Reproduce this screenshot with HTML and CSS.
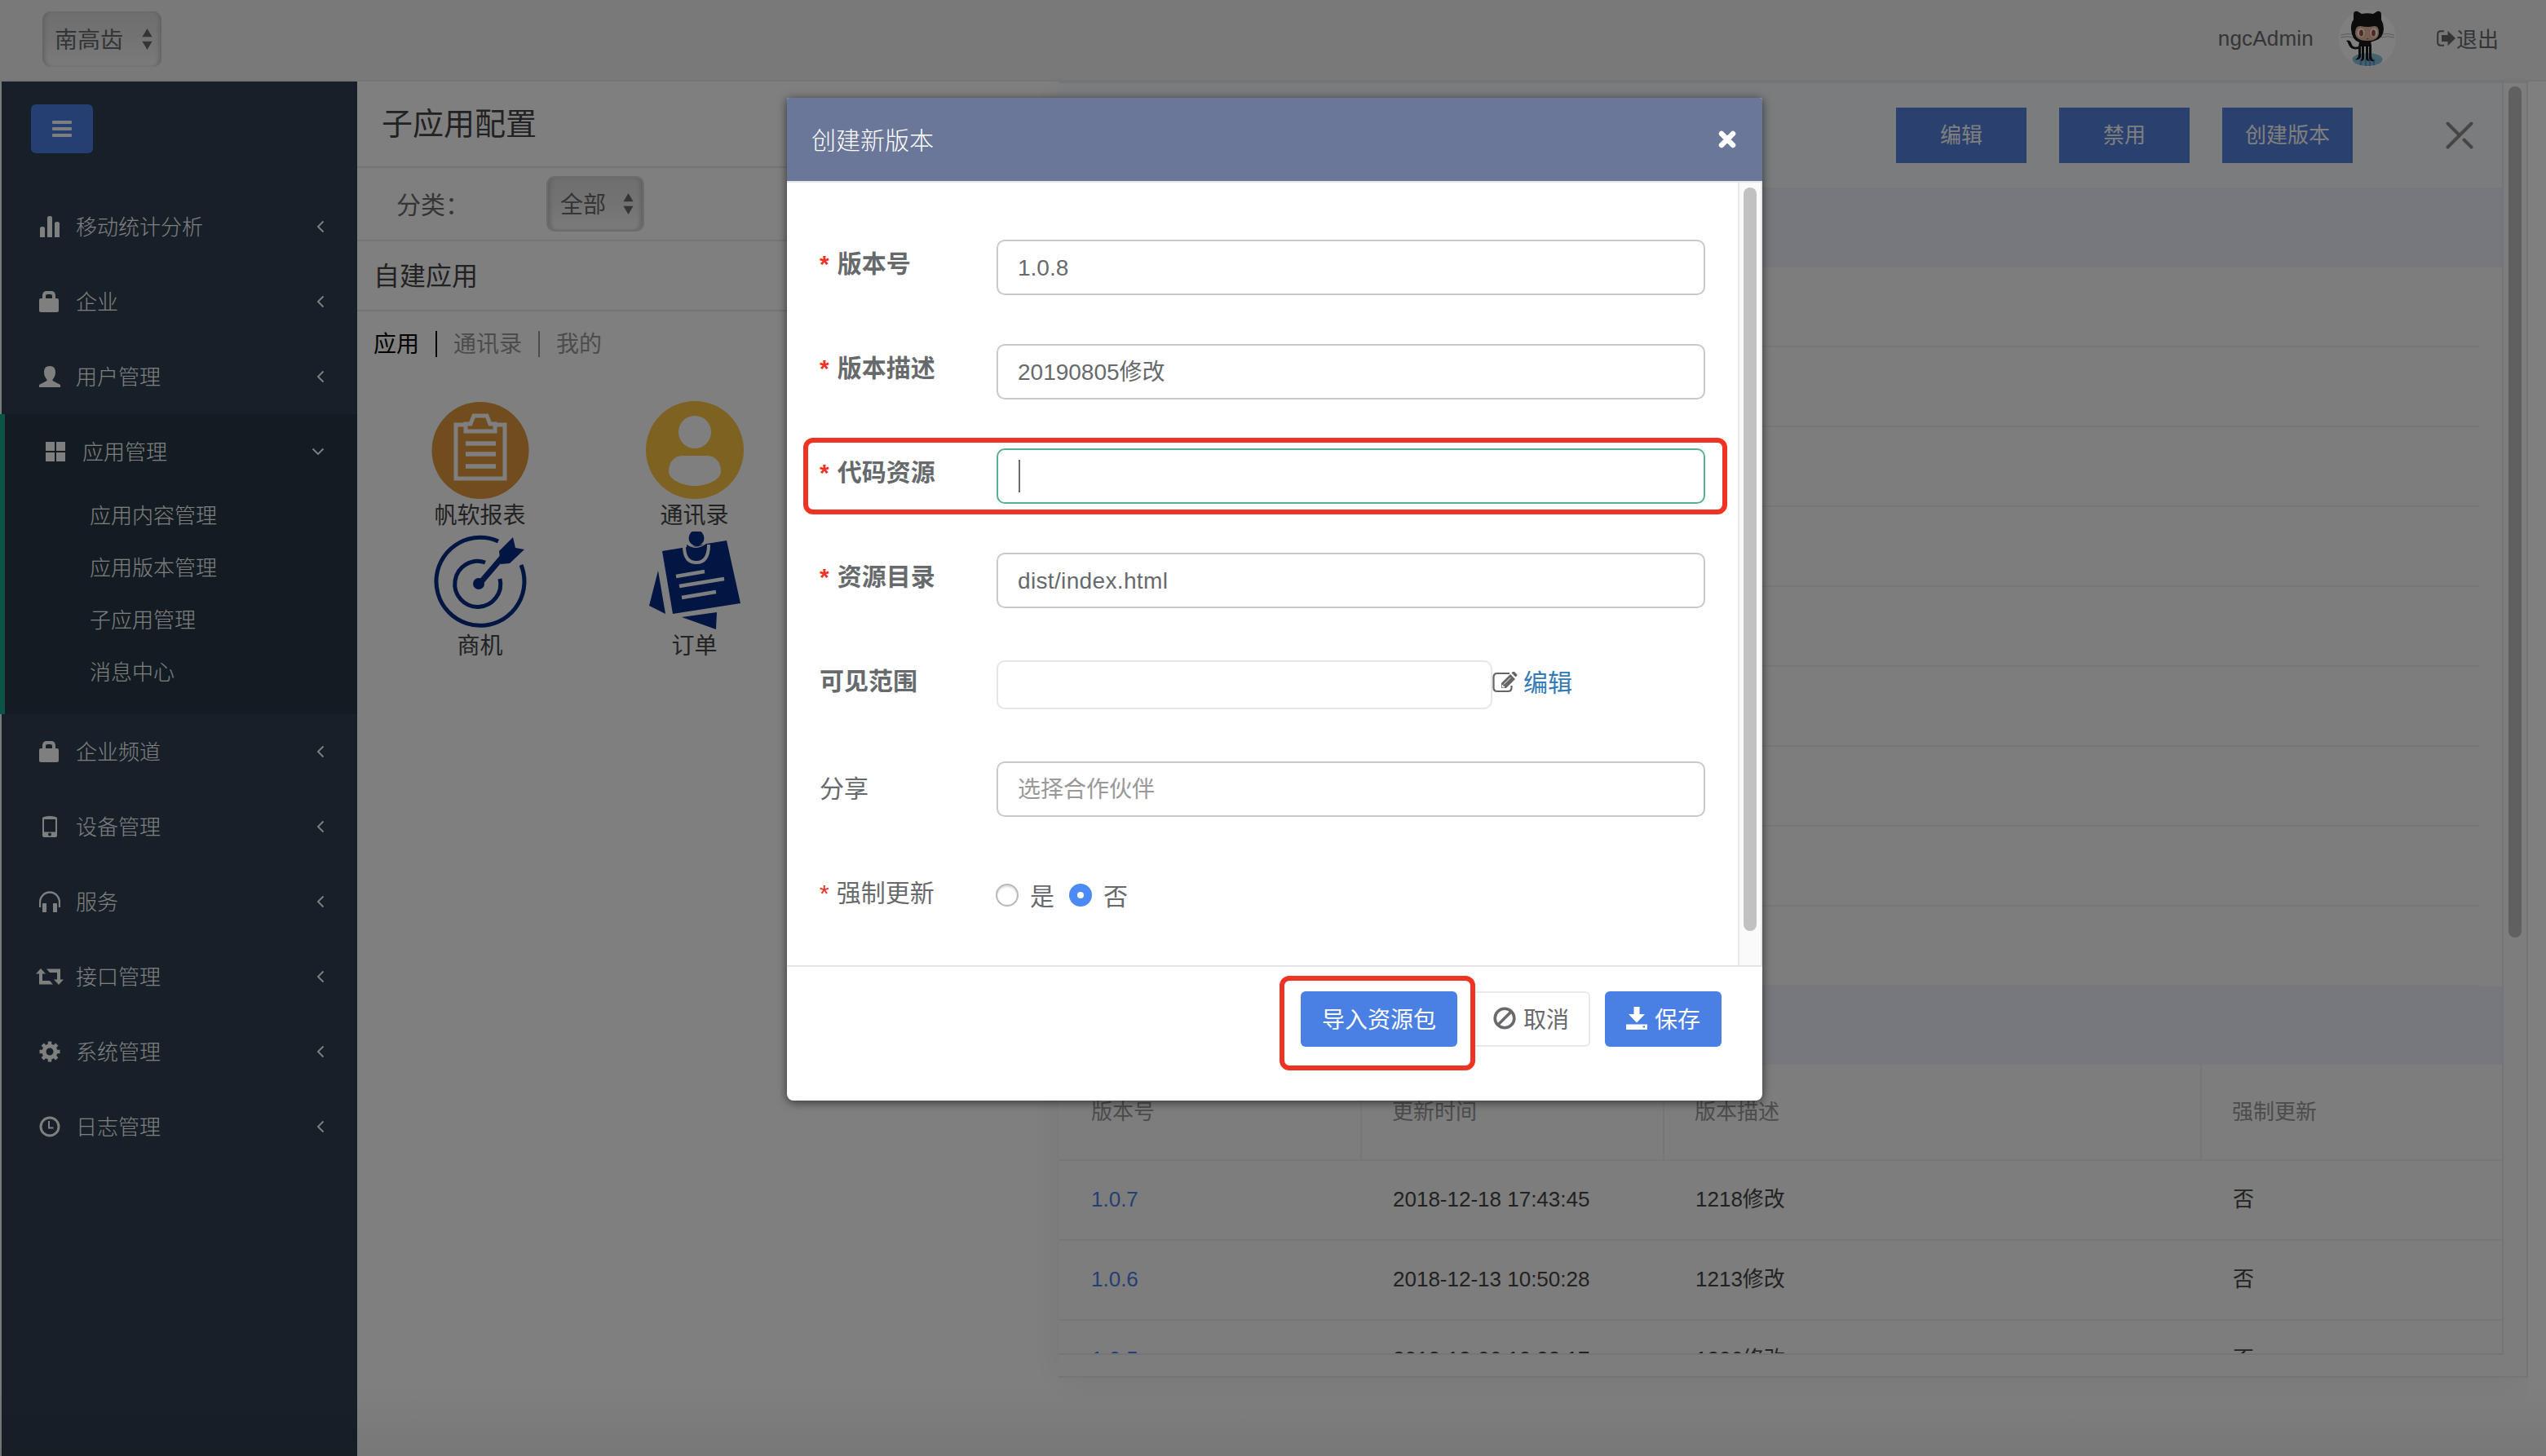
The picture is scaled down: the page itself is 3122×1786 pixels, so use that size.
FILE: index.html
```html
<!DOCTYPE html>
<html lang="zh-CN">
<head>
<meta charset="utf-8">
<title>子应用配置</title>
<link rel="stylesheet" href="styles.css">
</head>
<body>
<svg class="defs" width="0" height="0">
  <symbol id="left" viewBox="0 0 10 16"><path d="M8.500 1.500L2 8l6.500 6.500" fill="none" stroke="currentColor" stroke-width="1.900"/></symbol>
  <symbol id="down" viewBox="0 0 16 10"><path d="M1.500 1.500L8 8l6.500-6.500" fill="none" stroke="currentColor" stroke-width="1.900"/></symbol>
  <symbol id="lock" viewBox="0 0 24 26"><path d="M2 9h2V6c0-4 2-6 5-6h6c3 0 5 2 5 6v3h2q2 0 2 2v13q0 2-2 2H2q-2 0-2-2V11q0-2 2-2zm6 0h8V6q0-2-2-2h-4q-2 0-2 2z" fill="currentColor"/></symbol>
  <symbol id="sort" viewBox="0 0 14 28"><path d="M7 0l6.500 11H.5zM7 28l6.500-11H.5z" fill="currentColor"/></symbol>
</svg>

<div class="app">
  <header class="topbar">
    <div class="select company"><span>南高齿</span><svg width="13" height="26"><use href="#sort"/></svg></div>
    <div class="user">
      <span class="user-name">ngcAdmin</span>
      <svg class="avatar" width="70" height="70" viewBox="0 0 70 70">
        <circle cx="35" cy="35" r="35" fill="#fff"/>
        <ellipse cx="35" cy="61" rx="18.500" ry="8" fill="#8dc5dc"/>
        <path d="M27 60v8M33 60v9M38 60v9M43 60v8" stroke="#6696c4" stroke-width="2.500"/>
        <path d="M2 31q8-2.500 16-1M2 34q8-2.500 16 0M52 30q8-1.500 16 1M52 34q8-2.500 16 0" fill="none" stroke="#bbb" stroke-width="1"/>
        <path d="M18 6q0-5 5-4l5 3q7-1.500 14 0l5-3q5-1 5 4v6q3 5 3 11 0 12-11 15-4 1-5 2l1 3v14q1 5 4 6-5 1-7-3V45h-1v14q1 3 1 4-3 0-4-3V45h-2v15q-1 3-4 3l1-4V45h-1v13q-2 4-7 3 4-2 4-6v-7q-9 2-12-5-1-4-3-5 5-2 7 5 2 4 8 2l1-5Q16 37 15 24q-.5-7 3-12z" fill="#1b1919"/>
        <path d="M20 29q0-10 7-9 8 2 16 0 6-1 6 8 0 10-14 10t-15-9z" fill="#e6bc9f"/>
        <ellipse cx="27" cy="28" rx="4.500" ry="5.500" fill="#fff"/><ellipse cx="43" cy="28" rx="4.500" ry="5.500" fill="#fff"/>
        <ellipse cx="27.500" cy="28.500" rx="2.400" ry="4" fill="#ac4b40"/><ellipse cx="42.500" cy="28.500" rx="2.400" ry="4" fill="#ac4b40"/>
        <path d="M34 35.500q1.200.8 2.500 0" fill="none" stroke="#ac4b40"/>
      </svg>
      <span class="logout"><svg width="23" height="20" viewBox="0 0 23 20"><path d="M9 1.200H5Q1.200 1.200 1.200 5v10q0 3.800 3.800 3.800h4" fill="none" stroke="currentColor" stroke-width="2"/><path d="M6 6h7.500V.8L23 10l-9.500 9.200V14H6z" fill="currentColor"/></svg><span>退出</span></span>
    </div>
  </header>

  <div class="main">
    <nav class="sidebar">
      <div class="menu-toggle"><i></i><i></i><i></i></div>
      <ul class="menu">
        <li class="item"><span class="ico"><svg width="26" height="26" viewBox="0 0 26 26"><path d="M1 26V15q0-2 3-2t3 2v11zM10 26V2q0-2 3-2t3 2v24zM19 26V9q0-2 3-2t3 2v17z" fill="currentColor"/></svg></span><span class="name">移动统计分析</span><svg class="arrow" width="10" height="16"><use href="#left"/></svg></li>
        <li class="item"><span class="ico"><svg width="24" height="26"><use href="#lock"/></svg></span><span class="name">企业</span><svg class="arrow" width="10" height="16"><use href="#left"/></svg></li>
        <li class="item"><span class="ico"><svg width="26" height="26" viewBox="0 0 26 26"><path d="M13 0c5 0 7 3 7 7.500 0 4-1.500 7-3.500 9v1.500L26 23v3H0v-3l9.500-5v-1.500C7.500 14.500 6 11.500 6 7.500 6 3 8 0 13 0z" fill="currentColor"/></svg></span><span class="name">用户管理</span><svg class="arrow" width="10" height="16"><use href="#left"/></svg></li>
        <li class="active">
          <div class="item"><span class="ico"><svg width="24" height="24" viewBox="0 0 24 24"><path d="M0 0h11v11H0zM13 0h11v11H13zM0 13h11v11H0zM13 13h11v11H13z" fill="currentColor"/></svg></span><span class="name">应用管理</span><svg class="arrow" width="16" height="10"><use href="#down"/></svg></div>
          <ul class="submenu"><li>应用内容管理</li><li>应用版本管理</li><li>子应用管理</li><li>消息中心</li></ul>
        </li>
        <li class="item"><span class="ico"><svg width="24" height="26"><use href="#lock"/></svg></span><span class="name">企业频道</span><svg class="arrow" width="10" height="16"><use href="#left"/></svg></li>
        <li class="item"><span class="ico"><svg width="26" height="26" viewBox="0 0 26 26"><path fill-rule="evenodd" d="M6 1q7-2 14 0 2 0 2 2v21q0 2-2 2H6q-2 0-2-2V3q0-2 2-2zm0 3v15.500h14V4zm7 16.500a2 2 0 100 4 2 2 0 000-4z" fill="currentColor"/></svg></span><span class="name">设备管理</span><svg class="arrow" width="10" height="16"><use href="#left"/></svg></li>
        <li class="item"><span class="ico"><svg width="26" height="26" viewBox="0 0 26 26"><path d="M1 20v-6a12 12.500 0 0124 0v6" fill="none" stroke="currentColor" stroke-width="2.300"/><path d="M4 15h5v11H4zM17 15h5v11h-5z" fill="currentColor"/></svg></span><span class="name">服务</span><svg class="arrow" width="10" height="16"><use href="#left"/></svg></li>
        <li class="item"><span class="ico wide"><svg width="34" height="20" viewBox="0 0 34 20"><path d="M6 0l6 6.500H8V15h9l4 4.500H4v-13H0zM28 20l-6-6.500h4V5h-9l-4-4.500h17v13h4z" fill="currentColor"/></svg></span><span class="name">接口管理</span><svg class="arrow" width="10" height="16"><use href="#left"/></svg></li>
        <li class="item"><span class="ico"><svg width="26" height="26" viewBox="0 0 26 26"><circle cx="13" cy="13" r="7" fill="none" stroke="currentColor" stroke-width="5"/><path d="M13 .5V5M13 21v4.500M.5 13H5M21 13h4.500M4.200 4.200l3 3M18.800 18.800l3 3M4.200 21.800l3-3M18.800 7.200l3-3" stroke="currentColor" stroke-width="4.500"/></svg></span><span class="name">系统管理</span><svg class="arrow" width="10" height="16"><use href="#left"/></svg></li>
        <li class="item"><span class="ico"><svg width="26" height="26" viewBox="0 0 26 26"><circle cx="13" cy="13" r="11" fill="none" stroke="currentColor" stroke-width="3"/><path d="M12 6v8.500h5.500" fill="none" stroke="currentColor" stroke-width="2"/></svg></span><span class="name">日志管理</span><svg class="arrow" width="10" height="16"><use href="#left"/></svg></li>
      </ul>
    </nav>

    <section class="list-panel">
      <h1>子应用配置</h1>
      <div class="filter"><span>分类：</span><div class="select"><span>全部</span><svg width="13" height="26"><use href="#sort"/></svg></div></div>
      <h2>自建应用</h2>
      <div class="tabs"><span class="on">应用</span><span>通讯录</span><span>我的</span></div>
      <div class="apps">
        <div class="app-cell">
          <svg width="120" height="120" viewBox="0 0 120 120"><circle cx="60" cy="60.500" r="59.500" fill="#e0983c"/><path d="M42 29H30v66h60V29H78" fill="none" stroke="#fff" stroke-width="5"/><path d="M42 37v-9h6l4-10h16l4 10h6v9z" fill="none" stroke="#fff" stroke-width="5"/><path d="M42 52h37M42 65h37M42 80h37" stroke="#fff" stroke-width="5.500"/></svg>
          <span>帆软报表</span>
        </div>
        <div class="app-cell">
          <svg width="120" height="120" viewBox="0 0 120 120"><circle cx="60" cy="60" r="60" fill="#fac444"/><circle cx="60" cy="38" r="20" fill="#fff"/><path d="M45 67h30c11 0 17 9 17 19 0 11-18 18-32 18s-32-7-32-18c0-10 6-19 17-19z" fill="#fff"/></svg>
          <span>通讯录</span>
        </div>
        <div class="app-cell">
          <svg width="120" height="120" viewBox="0 0 120 120" fill="none" stroke="#042c86"><path d="M82 12A54 54 0 10110 41" stroke-width="5"/><path d="M66 38a28 28 0 1018 20" stroke-width="5"/><path d="M59 64L89 29" stroke-width="7"/><circle cx="58" cy="64" r="7" fill="#042c86" stroke="none"/><path d="M83 24L100 7l3 13 11 2-18 17-11 1z" fill="#042c86" stroke="none"/></svg>
          <span>商机</span>
        </div>
        <div class="app-cell">
          <svg width="120" height="120" viewBox="0 0 120 120" fill="#042c86"><path d="M20 24l79-13 17 77-83 13z"/><path d="M15 48l9 53-20-10zM44 105l43-6-1 21z"/><path d="M47 18q0 20 15 20t15-22" fill="none" stroke="#fff" stroke-width="4"/><circle cx="62" cy="8" r="9.500"/><path d="M50 15q12 12 24-1 0 18-12 18T50 15z"/><path d="M50 15q12 9 24-1" fill="none" stroke="#fff" stroke-width="1.500"/><path d="M37 55l35-6M41 67l55-9M44 81l42-7" stroke="#fff" stroke-width="4.500"/></svg>
          <span>订单</span>
        </div>
      </div>
    </section>

    <section class="detail">
      <div class="detail-inner">
        <div class="actions">
          <span class="btn">编辑</span><span class="btn">禁用</span><span class="btn">创建版本</span>
          <svg width="34" height="34" viewBox="0 0 34 34"><path d="M2.500 31.500l29-29M2.500 2.500L17 17M22.500 22.500l9 9" fill="none" stroke="#8c8c8c" stroke-width="4" stroke-linecap="round"/></svg>
        </div>
        <div class="band"></div>
        <div class="info"><div></div><div></div><div></div><div></div><div></div><div></div><div></div><div></div><div></div></div>
        <div class="band"></div>
        <div class="row head"><span>版本号</span><span>更新时间</span><span>版本描述</span><span>强制更新</span></div>
        <div class="row"><a>1.0.7</a><span>2018-12-18 17:43:45</span><span>1218修改</span><span>否</span></div>
        <div class="row"><a>1.0.6</a><span>2018-12-13 10:50:28</span><span>1213修改</span><span>否</span></div>
        <div class="row"><a>1.0.5</a><span>2018-12-06 10:38:17</span><span>1206修改</span><span>否</span></div>
      </div>
      <div class="track"><div class="thumb"></div></div>
    </section>
    <div class="gutter"></div>
  </div>
</div>

<div class="backdrop"></div>

<div class="modal">
  <div class="modal-head"><span>创建新版本</span><svg width="22" height="22" viewBox="0 0 22 22"><path d="M4 4l14 14M18 4L4 18" stroke="#fff" stroke-width="6.500" stroke-linecap="round"/></svg></div>
  <div class="modal-body">
    <form class="form">
      <div class="field"><label><b>*</b>版本号</label><div class="input">1.0.8</div></div>
      <div class="field"><label><b>*</b>版本描述</label><div class="input">20190805修改</div></div>
      <div class="field"><label><b>*</b>代码资源</label><div class="input focus"><i class="caret"></i></div></div>
      <div class="field"><label><b>*</b>资源目录</label><div class="input path">dist/index.html</div></div>
      <div class="field scope"><label>可见范围</label><div class="scope-box"></div>
        <svg width="31" height="27" viewBox="0 0 31 27"><path d="M21 2H6Q1.500 2 1.500 6.500v13Q1.500 24 6 24h13q4.500 0 4.500-4.500V17" fill="none" stroke="#666" stroke-width="2.200"/><path d="M11 20v-6L22 3l6 6-11 11z" fill="#666"/><path d="M23.500 1.500L25 0q1-.5 2 0l3 3q1 1 0 2l-1.500 1.500z" fill="#666"/><path d="M14 15.500L22.500 7" stroke="#fff" stroke-width="1"/><path d="M12.500 16v2.500H15" fill="none" stroke="#fff" stroke-width="1.400"/></svg>
        <a>编辑</a></div>
      <div class="field"><label class="plain">分享</label><div class="input placeholder">选择合作伙伴</div></div>
      <div class="field force"><label class="plain"><b>*</b>强制更新</label><i class="radio"></i><span>是</span><i class="radio checked"></i><span>否</span></div>
    </form>
    <div class="modal-track"><div class="modal-thumb"></div></div>
  </div>
  <div class="modal-foot">
    <span class="mbtn"><span>导入资源包</span></span>
    <span class="mbtn cancel"><svg width="28" height="28" viewBox="0 0 28 28"><circle cx="14" cy="14" r="11.800" fill="none" stroke="currentColor" stroke-width="3.600"/><path d="M6 22L22 6" stroke="currentColor" stroke-width="3.600"/></svg><span>取消</span></span>
    <span class="mbtn save"><svg width="26" height="28" viewBox="0 0 26 28"><path d="M9.500 0h7v9H23L13 19.500 3 9h6.500z" fill="currentColor"/><path fill-rule="evenodd" d="M0 21.500h26V28H0zm20.500 2v2h2.500v-2z" fill="currentColor"/></svg><span>保存</span></span>
  </div>
  <div class="mark mark-field"></div>
  <div class="mark mark-button"></div>
</div>
</body>
</html>
```
FILE: styles.css
```css
* { box-sizing: border-box; }
html, body { margin: 0; height: 1786px; overflow: hidden; }
body {
  font-family: "Liberation Sans", "Noto Sans CJK SC", sans-serif;
  font-size: 26px;
  color: #676a6c;
  background: #fff;
}
ul { list-style: none; margin: 0; padding: 0; }
h1, h2 { margin: 0; font-weight: 400; }
svg { display: block; flex: none; }
.defs { position: absolute; }

.app { display: flex; flex-direction: column; height: 1786px; }

.topbar {
  height: 100px;
  flex: none;
  display: flex;
  justify-content: space-between;
  align-items: flex-start;
  padding: 0 58px 0 52px;
  background: #f3f3f4;
  border-bottom: 2px solid #e7eaec;
}
.select {
  display: flex;
  align-items: center;
  justify-content: space-between;
  height: 68px;
  padding: 0 11px 0 15px;
  font-size: 28px;
  color: #676a6c;
  background: linear-gradient(#dedede, #e6e6e6 50%, #f6f6f6);
  border-radius: 10px;
  box-shadow: inset 5px 0 5px -2px #c4c4c4, inset -5px 0 5px -2px #c4c4c4;
}
.select span { padding-bottom: 3px; }
.company { width: 146px; margin-top: 14px; }
.user { display: flex; align-items: center; height: 94px; }
.user-name { letter-spacing: .2px; }
.avatar { margin: 0 50px 0 31px; }
.logout { display: flex; align-items: center; gap: 1px; }
.logout span { padding-bottom: 2px; }

.main { display: flex; flex: 1; min-height: 0; }

.sidebar { width: 438px; flex: none; background: #2f4050; border-left: 2px solid #f3f3f4; padding-top: 28px; color: #fff; }
.menu-toggle {
  width: 76px;
  height: 60px;
  margin: 0 0 44px 36px;
  border-radius: 6px;
  background: #4a7fe6;
  display: flex;
  flex-direction: column;
  align-items: center;
  justify-content: center;
  gap: 4px;
}
.menu-toggle i { width: 24px; height: 4px; background: #fff; border-radius: 1px; }
.item { height: 92px; display: flex; align-items: center; padding: 0 40px 0 46px; font-weight: 300; }
.name { padding-bottom: 3px; }
.ico { width: 45px; }
.wide { margin-left: -4px; width: 49px; }
.arrow { margin-left: auto; }
.active { height: 368px; margin-left: -2px; background: #293846; border-left: 6px solid #19aa8d; }
.active .item { padding: 0 40px 0 50px; }
.submenu { padding-left: 104px; font-weight: 300; }
.submenu li { height: 64px; line-height: 66px; }

.list-panel { width: 860px; flex: none; color: #444; }
.list-panel h1 { height: 106px; padding-left: 30px; line-height: 104px; font-size: 38px; border-bottom: 2px solid #e7eaec; }
.filter { height: 90px; display: flex; align-items: center; padding-left: 48px; font-size: 30px; border-bottom: 2px solid #e7eaec; color: #676a6c; }
.filter > span { width: 184px; padding-bottom: 3px; }
.filter .select { width: 120px; border: 2px solid #d8d8d8; }
.list-panel h2 { height: 86px; line-height: 86px; padding-left: 20px; font-size: 32px; border-bottom: 2px solid #e7eaec; }
.tabs { display: flex; margin: 24px 0 54px 20px; font-size: 28px; line-height: 32px; height: 32px; }
.tabs span { color: #999; padding: 1px 20px 0 20px; border-right: 2px solid #999; }
.tabs span.on { color: #000; border-color: #000; padding-left: 0; }
.tabs span:last-child { border: 0; }
.apps { display: grid; grid-template-columns: 263px 263px; padding-left: 19px; font-size: 28px; }
.app-cell { height: 160px; display: flex; flex-direction: column; align-items: center; line-height: 42px; }

.detail {
  width: 1802px;
  height: 1590px;
  flex: none;
  display: flex;
  background: #fafafa;
  border: solid #e7eaec;
  border-width: 2px 2px 2px 0;
  box-shadow: 0 4px 40px rgba(0, 0, 0, .07);
  clip-path: inset(0 0 -80px -80px);
}
.detail-inner { width: 1772px; height: 1560px; overflow: hidden; border: solid #e7eaec; border-width: 0 2px 2px 0; }
.actions {
  height: 130px;
  display: flex;
  justify-content: flex-end;
  align-items: center;
  gap: 40px;
  padding: 0 35px 0 0;
  background: #f7f9fb;
  border-bottom: 2px solid #eceeef;
}
.actions .btn { width: 160px; height: 68px; line-height: 68px; text-align: center; background: #5580dc; color: #fff; }
.actions svg { margin-left: 74px; }
.band { height: 96px; background: #eff1fa; }
.info { height: 882px; padding-right: 28px; }
.info div { height: 98px; border-bottom: 2px solid #efefef; }
.row {
  display: grid;
  grid-template-columns: 370px 371px 659px 1fr;
  height: 98px;
  line-height: 94px;
  border-bottom: 2px solid #eee;
  color: #444;
}
.row > * { padding-left: 40px; }
.row a { color: #4a7fe6; }
.head { height: 118px; line-height: 116px; color: #999; }
.head span + span { border-left: 2px solid #eee; padding-left: 37px; }
.track { width: 28px; padding: 4px 0 0 6px; }
.thumb { width: 16px; height: 1044px; border-radius: 8px; background: #c1c1c1; }
.gutter { flex: 1; }

.backdrop {
  position: absolute;
  inset: 0;
  background: linear-gradient(rgba(0, 0, 0, 0) 95%, rgba(0, 0, 0, .06)), rgba(0, 0, 0, .5);
}

.modal {
  position: absolute;
  left: 965px;
  top: 120px;
  width: 1196px;
  height: 1230px;
  display: flex;
  flex-direction: column;
  background: #fff;
  border-radius: 3px 3px 8px 8px;
  box-shadow: 0 2px 12px rgba(0, 0, 0, .6);
  font-size: 28px;
}
.modal-head {
  height: 104px;
  flex: none;
  display: flex;
  align-items: center;
  justify-content: space-between;
  padding: 0 32px 0 30px;
  background: #6b7799;
  color: #fff;
  font-size: 30px;
  font-weight: 200;
  border-bottom: 2px solid #e5e5e5;
  border-radius: 3px 3px 0 0;
}
.modal-head span { padding-bottom: 3px; }
.modal-body { height: 960px; display: flex; justify-content: space-between; }
.form { width: 1126px; padding: 70px 0 0 40px; }
.field { display: flex; height: 68px; margin-bottom: 60px; }
.field label { width: 217px; flex: none; font-size: 30px; font-weight: 700; line-height: 59px; }
.field label.plain { font-weight: 400; line-height: 68px; }
.field label b { color: #ee3224; margin-right: 10px; }
.field label.plain b { font-weight: 400; margin-right: 9px; }
.input { width: 869px; height: 68px; border: 2px solid #c8c9ce; border-radius: 10px; padding-left: 24px; line-height: 66px; }
.path { letter-spacing: .35px; }
.focus { border-color: #55b095; }
.caret { display: block; width: 2px; height: 40px; margin: 12px 0 0 1px; background: #676a6c; }
.placeholder { color: #999; line-height: 66px; }
.scope { align-items: flex-start; }
.scope-box { width: 608px; height: 60px; margin-top: 4px; border: 2px solid #e5e6e7; border-radius: 10px; }
.scope svg { margin: 18px 0 0 0; }
.scope a { margin-left: 7px; color: #337ab7; font-size: 30px; line-height: 64px; }
.force { align-items: center; font-size: 30px; }
.force .radio { width: 28px; height: 28px; border: 2px solid #b9b9b9; border-radius: 50%; box-shadow: inset 0 2px 2px #ddd; margin: 4px 0 0 -1px; }
.force span { margin: 2px 18px 0 14px; }
.force .checked { border: 10px solid #4c8bf5; box-shadow: none; margin-left: 0; }
.modal-track { width: 30px; padding: 6px 0 0 5px; background: #fafafa; border: solid #e8e8e8; border-width: 0 2px; }
.modal-thumb { width: 16px; height: 912px; border-radius: 8px; background: #c1c1c1; }
.modal-foot {
  flex: 1;
  display: flex;
  justify-content: flex-end;
  align-items: flex-start;
  gap: 18px;
  padding: 30px 50px 0 0;
  border-top: 2px solid #e5e5e5;
}
.mbtn { display: flex; align-items: center; justify-content: center; gap: 9px; width: 192px; height: 68px; border-radius: 6px; background: #4a7fe3; color: #fff; }
.mbtn svg { margin-bottom: 2px; }
.mbtn span { padding-bottom: 3px; }
.cancel { width: 145px; background: #fff; color: #676a6c; border: 2px solid #e7eaec; }
.save { width: 143px; }

.mark { position: absolute; border: 6px solid #ee3224; border-radius: 12px; }
.mark-field { left: 20px; top: 417px; width: 1133px; height: 94px; }
.mark-button { left: 604px; top: 1077px; width: 240px; height: 116px; }
```
